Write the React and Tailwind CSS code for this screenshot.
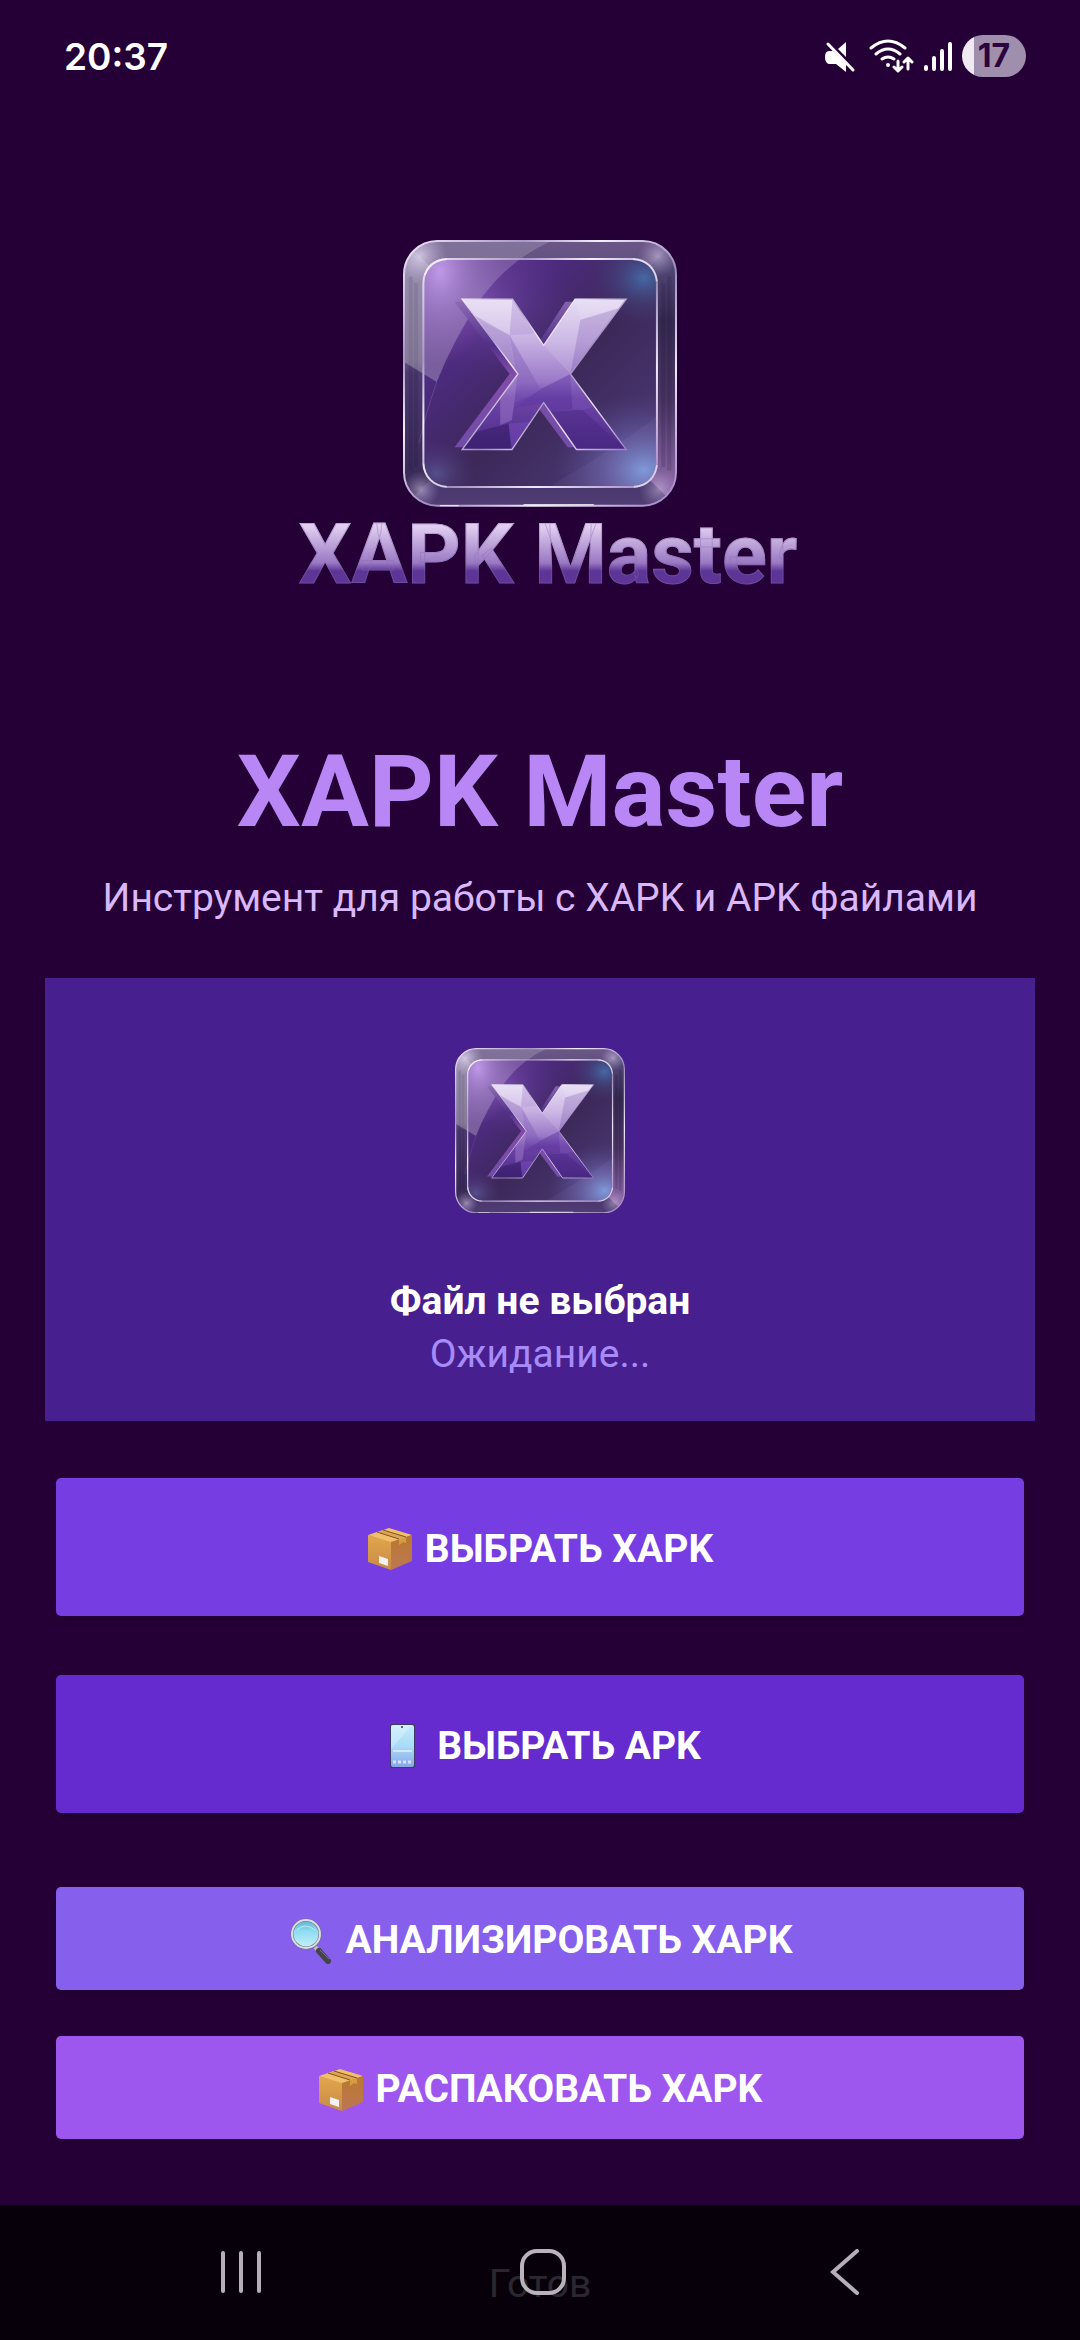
import { useId } from 'react';

const X_FRONT = '246,238 397,238 490,376 584,238 737,238 570,462 737,688 588,688 490,548 395,688 246,688 413,462';
const X_BACK = '223,246 390,246 480,360 555,246 600,246 560,462 640,681 562,681 476,566 390,681 223,681 388,462';

function Plaque({ className }) {
  const id = useId();
  const url = name => `url(#${id}${name})`;
  return (
    <svg viewBox="69 61 820 798" className={className} aria-hidden="true">
      <defs>
        <linearGradient id={`${id}rim`} x1="0" y1="0" x2="0" y2="1">
          <stop offset="0" stopColor="#6a5788" />
          <stop offset=".4" stopColor="#45375f" />
          <stop offset=".75" stopColor="#3b2a5c" />
          <stop offset="1" stopColor="#4f3d74" />
        </linearGradient>
        <linearGradient id={`${id}right`} x1="0" y1="0" x2="0" y2="1">
          <stop offset="0" stopColor="#5d5486" />
          <stop offset=".3" stopColor="#352a50" />
          <stop offset=".6" stopColor="#4a3563" />
          <stop offset=".9" stopColor="#8563a0" />
        </linearGradient>
        <linearGradient id={`${id}left`} x1="0" y1="0" x2="0" y2="1">
          <stop offset="0" stopColor="#8d80a6" />
          <stop offset=".45" stopColor="#62527c" />
          <stop offset=".5" stopColor="#4c3a70" />
          <stop offset="1" stopColor="#33254f" />
        </linearGradient>
        <linearGradient id={`${id}edge`} x1="0" y1="0" x2="1" y2="1">
          <stop offset="0" stopColor="#efe9f7" />
          <stop offset=".22" stopColor="#a898c6" />
          <stop offset=".36" stopColor="#f4effb" />
          <stop offset=".55" stopColor="#9c8abd" />
          <stop offset=".74" stopColor="#f0e8fa" />
          <stop offset="1" stopColor="#a07fc4" />
        </linearGradient>
        <linearGradient id={`${id}face`} x1="0" y1="0" x2="1" y2="1">
          <stop offset="0" stopColor="#68399a" />
          <stop offset=".3" stopColor="#4b2a7c" />
          <stop offset=".55" stopColor="#3d2859" />
          <stop offset="1" stopColor="#4c3c78" />
        </linearGradient>
        <radialGradient id={`${id}pink`}>
          <stop offset="0" stopColor="#b183e4" />
          <stop offset=".45" stopColor="#9064c0" stopOpacity=".55" />
          <stop offset="1" stopColor="#7440a8" stopOpacity="0" />
        </radialGradient>
        <radialGradient id={`${id}blue`}>
          <stop offset="0" stopColor="#456ca8" stopOpacity=".95" />
          <stop offset=".45" stopColor="#45508a" stopOpacity=".5" />
          <stop offset="1" stopColor="#463468" stopOpacity="0" />
        </radialGradient>
        <radialGradient id={`${id}sky`}>
          <stop offset="0" stopColor="#7b96d8" />
          <stop offset=".4" stopColor="#6c68b0" stopOpacity=".7" />
          <stop offset="1" stopColor="#5a4690" stopOpacity="0" />
        </radialGradient>
        <radialGradient id={`${id}glint`}>
          <stop offset="0" stopColor="#e2d6f2" stopOpacity=".75" />
          <stop offset="1" stopColor="#c0a8e0" stopOpacity="0" />
        </radialGradient>
        <linearGradient id={`${id}gloss`} x1="0" y1="0" x2="0" y2="1">
          <stop offset="0" stopColor="#fff" stopOpacity=".16" />
          <stop offset="1" stopColor="#fff" stopOpacity=".25" />
        </linearGradient>
        <linearGradient id={`${id}x`} x1="0" y1="0" x2="0" y2="1">
          <stop offset="0" stopColor="#e4d8f2" />
          <stop offset=".28" stopColor="#c6b0e2" />
          <stop offset=".55" stopColor="#9a78c8" />
          <stop offset=".66" stopColor="#6d44a8" />
          <stop offset="1" stopColor="#4c2c86" />
        </linearGradient>
        <linearGradient id={`${id}back`} x1="0" y1="0" x2="0" y2="1">
          <stop offset="0" stopColor="#8c68b4" />
          <stop offset=".3" stopColor="#52308a" />
          <stop offset=".5" stopColor="#8850b0" />
          <stop offset="1" stopColor="#7650b0" />
        </linearGradient>
        <clipPath id={`${id}outer`}><rect x="72" y="64" width="814" height="792" rx="100" /></clipPath>
        <clipPath id={`${id}inner`}><rect x="130" y="118" width="699" height="682" rx="72" /></clipPath>
        <clipPath id={`${id}xclip`}><polygon points={X_FRONT} /></clipPath>
      </defs>

      {/* bevelled rim */}
      <g clipPath={url('outer')}>
        <rect x="72" y="64" width="814" height="792" fill={url('rim')} />
        <path d="M72 64 150 140V780L72 856Z" fill={url('left')} />
        <path d="M886 64 808 140V780L886 856Z" fill={url('right')} />
        <circle cx="120" cy="108" r="80" fill={url('glint')} />
        <circle cx="832" cy="110" r="60" fill={url('glint')} opacity=".7" />
        <circle cx="122" cy="808" r="56" fill={url('glint')} opacity=".7" />
        <circle cx="835" cy="808" r="60" fill={url('glint')} opacity=".6" />
        <path d="M92 170V750M108 190V740M866 170V750M848 190V740" stroke="#1f1238" strokeWidth="12" opacity=".16" />
      </g>

      {/* face */}
      <rect x="130" y="118" width="699" height="682" rx="72" fill={url('face')} />
      <g clipPath={url('inner')}>
        <ellipse cx="320" cy="250" rx="260" ry="230" fill={url('pink')} opacity=".3" />
        <ellipse cx="180" cy="155" rx="190" ry="280" fill={url('pink')} />
        <ellipse cx="790" cy="175" rx="170" ry="150" fill={url('blue')} />
        <ellipse cx="790" cy="750" rx="270" ry="230" fill={url('sky')} />
        <ellipse cx="170" cy="760" rx="120" ry="100" fill={url('sky')} opacity=".35" />
        <path d="M520 790Q680 700 829 590V728Q829 800 757 800H510Z" fill="#fff" opacity=".04" />
      </g>
      <g clipPath={url('outer')}>
        <path d="M72 64H512Q380 125 300 240Q220 360 170 486L72 426Z" fill={url('gloss')} />
        <path d="M170 486Q140 570 116 670" stroke="#a890cc" strokeWidth="3" opacity=".25" fill="none" />
      </g>
      <rect x="130" y="118" width="699" height="682" rx="72" fill="none" stroke={url('edge')} strokeWidth="6" />
      <rect x="72" y="64" width="814" height="792" rx="100" fill="none" stroke={url('edge')} strokeWidth="6" />
      <path d="M135 165Q145 122 200 118M757 118Q820 122 829 185M130 730Q135 792 200 800M760 800Q820 795 829 735" stroke="#fff" strokeWidth="5" fill="none" opacity=".6" />
      <path d="M430 853H640M180 856H235" stroke="#fff" strokeWidth="4" opacity=".75" />

      {/* letter */}
      <polygon points={X_BACK} fill={url('back')} opacity=".9" />
      <polygon points={X_FRONT} fill={url('x')} />
      <g clipPath={url('xclip')}>
        <path d="M246 238H397L388 346L290 300Z" fill="#fff" opacity=".22" />
        <path d="M397 238 470 340 388 346Z" fill="#a284cc" opacity=".25" />
        <path d="M280 285 388 346 404 452Z" fill="#8d6cba" opacity=".35" />
        <path d="M388 346 480 508 400 550 404 440Z" fill="#7a55b4" opacity=".38" />
        <path d="M584 238 600 300 570 462 490 376Z" fill="#fff" opacity=".12" />
        <path d="M600 300 720 264 570 462Z" fill="#8a6cb4" opacity=".28" />
        <path d="M584 238H737L720 264 600 300Z" fill="#fff" opacity=".2" />
        <path d="M480 508 570 462 576 566 510 575 490 548 400 565Z" fill="#5e35a0" opacity=".5" />
        <path d="M570 462 640 560 606 570 576 566Z" fill="#7850b4" opacity=".5" />
        <path d="M413 462 360 530V615L395 600Z" fill="#b08ad4" opacity=".4" />
        <path d="M246 688 290 635 385 610 392 688Z" fill="#2f1660" opacity=".5" />
        <path d="M385 610 450 605 395 688Z" fill="#7a4cc0" opacity=".5" />
        <path d="M510 575 606 570 737 688H588Z" fill="#43207c" opacity=".35" />
      </g>
      <polygon points={X_FRONT} fill="none" stroke={url('edge')} strokeWidth="4" />
    </svg>
  );
}

function BoxEmoji() {
  const id = useId();
  return (
    <svg viewBox="0 0 46 46" className="size-[46px] shrink-0" aria-hidden="true">
      <defs>
        <linearGradient id={`${id}l`} x1="0" y1="0" x2="0" y2="1">
          <stop offset="0" stopColor="#e2a74e" /><stop offset="1" stopColor="#c98a45" />
        </linearGradient>
        <linearGradient id={`${id}r`} x1="0" y1="0" x2="0" y2="1">
          <stop offset="0" stopColor="#b9782f" /><stop offset="1" stopColor="#bd7753" />
        </linearGradient>
      </defs>
      <path d="M1 9 22 2 45 9 24 17Z" fill="#efbf69" />
      <path d="M1 9 24 16V44L1 36Z" fill={`url(#${id}l)`} />
      <path d="M24 16 45 9V35L24 44Z" fill={`url(#${id}r)`} />
      <path d="M32 13 39 11V17L36 16 32 19Z" fill="#d99a45" />
      <path d="M11 6 33 13 39 11 17 4Z" fill="#dda451" />
      <path d="M10 6 32 13M16 4 39 11" stroke="#7d5220" strokeWidth="1" fill="none" />
      <path d="M12 30 21 33V40L12 37Z" fill="#f3eff2" />
    </svg>
  );
}

function PhoneEmoji() {
  const id = useId();
  return (
    <svg viewBox="0 0 46 46" className="size-[46px] shrink-0" aria-hidden="true">
      <defs>
        <linearGradient id={`${id}s`} x1="0" y1="0" x2="0" y2="1">
          <stop offset="0" stopColor="#c3ecf8" /><stop offset=".5" stopColor="#a9dcf8" /><stop offset="1" stopColor="#8aa5ea" />
        </linearGradient>
      </defs>
      <rect x="11" y="1" width="25" height="44" rx="2" fill="#3f3a66" />
      <rect x="12" y="2" width="23" height="42" rx="2" fill={`url(#${id}s)`} />
      <path d="M12 2H33L12 26Z" fill="#fff" opacity=".25" />
      <circle cx="23" cy="4" r="1" fill="#36344f" />
      <rect x="14" y="27" width="19" height="2" fill="#d5e8fb" />
      <path d="M14 39H17M19 39H22M24 39H27M29 39H32" stroke="#d7e2fb" strokeWidth="3" />
    </svg>
  );
}

function SearchEmoji() {
  const id = useId();
  return (
    <svg viewBox="0 0 46 46" className="size-[46px] shrink-0" aria-hidden="true">
      <defs>
        <linearGradient id={`${id}g`} x1="0" y1="0" x2="0" y2="1">
          <stop offset="0" stopColor="#5bb3cf" /><stop offset=".4" stopColor="#8fdcf0" /><stop offset="1" stopColor="#c5f1fa" />
        </linearGradient>
      </defs>
      <path d="M27 29 31 33" stroke="#b9b9c4" strokeWidth="4" />
      <path d="M31 33 40 43" stroke="#46434c" strokeWidth="6" strokeLinecap="round" />
      <path d="M32 32 41 41" stroke="#77747c" strokeWidth="1" strokeLinecap="round" />
      <circle cx="18" cy="16" r="14" fill={`url(#${id}g)`} stroke="#6f7187" strokeWidth="3" />
      <circle cx="18" cy="16" r="14" fill="none" stroke="#dcdde6" strokeWidth="2" />
      <path d="M9 12Q17 4 27 12" stroke="#d8f5fb" strokeWidth="1" fill="none" opacity=".7" />
    </svg>
  );
}

function StatusBar() {
  return (
    <header className="flex h-28 items-center justify-between pl-16 pr-[54px] text-white">
      <time className="font-['Inter',sans-serif] text-[37px] font-semibold leading-none">20:37</time>
      <div className="flex items-center">
        {/* звук выключен */}
        <svg viewBox="0 0 30 31" className="mr-[14px] h-[31px] w-[30px]" aria-hidden="true">
          <path d="M4 10H8L21 23V31L11 23H4Q0 22 0 16T4 10Z" fill="#fff" />
          <path d="M13 8 21 1V16Z" fill="#fff" />
          <path d="M3 3 28 29" stroke="#fff" strokeWidth="3" strokeLinecap="round" />
        </svg>
        <svg viewBox="0 0 45 34" className="mr-[10px] h-[34px] w-[45px]" fill="none" stroke="#fff" strokeWidth="3" strokeLinecap="round" aria-hidden="true">
          <path d="M2 9Q19-5 36 9M7 15Q19 5 31 15M13 20Q19 16 25 20" />
          <circle cx="19" cy="26" r="2" fill="#fff" stroke="none" />
          <path d="M29 22V31M25 28 29 32 33 28M39 30V20M35 23 39 19 43 23" strokeLinejoin="round" />
        </svg>
        <svg viewBox="0 0 28 30" className="mr-[10px] h-[30px] w-7" stroke="#fff" strokeWidth="4" strokeLinecap="round" aria-hidden="true">
          <path d="M2 26V28M10 17V28M18 10V28M26 3V28" />
        </svg>
        <div className="flex h-[42px] w-16 items-center justify-center rounded-full bg-linear-to-r from-[#efeaf2] from-18% to-[#a08fac] to-18% font-['Inter',sans-serif] text-[32px] font-bold leading-none text-[#2a0340]">
          17
        </div>
      </div>
    </header>
  );
}

function NavBar() {
  return (
    <nav className="fixed inset-x-0 bottom-0 flex h-[135px] items-center justify-around bg-black/80 pb-0.5 pl-[90px] pr-[84px]">
      <button type="button" aria-label="Недавние" className="flex size-16 items-center justify-center">
        <svg viewBox="0 0 42 44" className="h-11 w-[42px]" stroke="#b5b0b8" strokeWidth="4" strokeLinecap="round">
          <path d="M3 3V41M21 3V41M39 3V41" />
        </svg>
      </button>
      <button type="button" aria-label="Домой" className="flex size-16 items-center justify-center">
        <svg viewBox="0 0 46 46" className="size-[46px]" fill="none" stroke="#b9b4bc" strokeWidth="4">
          <rect x="2" y="2" width="42" height="42" rx="15" />
        </svg>
      </button>
      <button type="button" aria-label="Назад" className="flex size-16 items-center justify-center">
        <svg viewBox="0 0 30 46" className="h-[46px] w-[30px]" fill="none" stroke="#b5b0b8" strokeWidth="4" strokeLinecap="round">
          <path d="M27 2 3 23 27 44" />
        </svg>
      </button>
    </nav>
  );
}

function ActionButton({ icon, label, className }) {
  return (
    <button
      type="button"
      className={`flex w-full items-center justify-center gap-3 rounded-[5px] pt-1 text-[39px] font-bold leading-none text-white shadow-md ${className}`}
    >
      {icon}
      <span>{label}</span>
    </button>
  );
}

export default function App() {
  return (
    <div className="min-h-screen bg-[#250036] font-['Roboto',sans-serif]">
      <StatusBar />
      <main className="flex flex-col items-center px-[45px] pb-7 pt-32 text-center">
        <Plaque className="w-[274px]" />
        <div className="mt-2 bg-linear-to-b from-[#e0cdf0] from-15% via-[#9a78c2] via-60% to-[#5c3596] to-70% bg-clip-text pl-4 text-[83px] font-bold leading-[80px] text-transparent [-webkit-text-stroke:1px_#8a6cb066]">
          XAPK Master
        </div>

        <h1 className="mt-[137px] text-[101px] font-bold leading-[120px] text-[#b987f5]">XAPK Master</h1>
        <p className="mt-[22px] text-[39px] leading-[48px] text-[#d9b8fb]">
          Инструмент для работы с XAPK и APK файлами
        </p>

        <section className="mt-14 flex w-full flex-col items-center bg-[#471f8e] pb-10 pt-[70px] text-[39px] leading-[53px]">
          <Plaque className="mb-[62px] w-[170px]" />
          <p className="font-bold text-white">Файл не выбран</p>
          <p className="text-[#a78bfa]">Ожидание...</p>
        </section>

        <div className="flex w-full flex-col px-[11px]">
          <ActionButton icon={<BoxEmoji />} label="ВЫБРАТЬ XAPK" className="mt-[57px] h-[138px] bg-[#753de2]" />
          <ActionButton icon={<PhoneEmoji />} label="ВЫБРАТЬ APK" className="mt-[59px] h-[138px] bg-[#652bcf]" />
          <ActionButton icon={<SearchEmoji />} label="АНАЛИЗИРОВАТЬ XAPK" className="mt-[74px] h-[103px] bg-[#865fed]" />
          <ActionButton icon={<BoxEmoji />} label="РАСПАКОВАТЬ XAPK" className="mt-[46px] h-[103px] bg-[#9d57ef]" />
        </div>

        <p className="mt-[119px] text-[39px] leading-[53px] text-[#d8c0e8]">Готов</p>
      </main>
      <NavBar />
    </div>
  );
}
